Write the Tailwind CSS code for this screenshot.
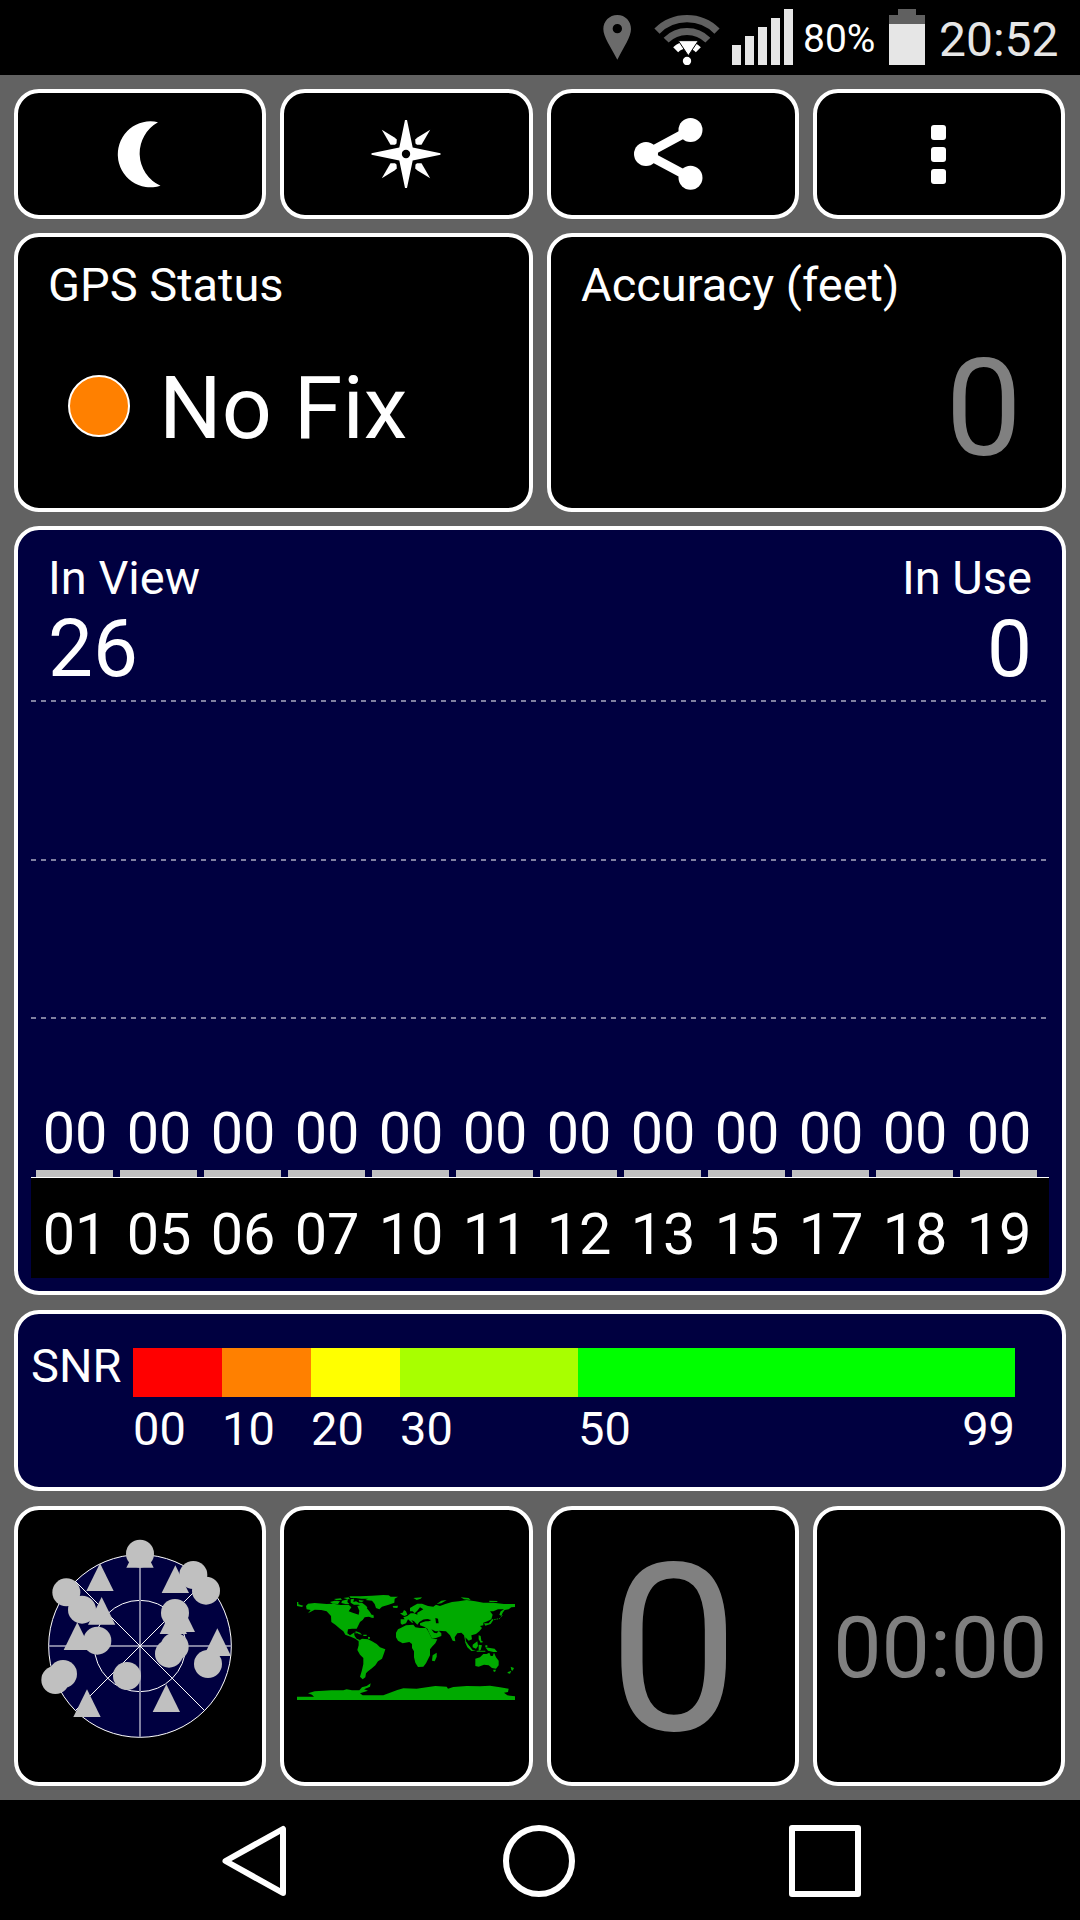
<!DOCTYPE html>
<html lang="en">
<head>
  <meta charset="UTF-8">
  <meta name="viewport" content="width=device-width, initial-scale=1">
  <title>GPS Status</title>
  <script src="https://cdn.jsdelivr.net/npm/@tailwindcss/browser@4"></script>
</head>
<body class="w-[1080px] h-[1920px] overflow-hidden bg-[#626262] text-white font-['Roboto',sans-serif] leading-none flex flex-col">

  <!-- Status bar -->
  <header class="h-[75px] shrink-0 bg-black flex items-start pl-[603px]">
    <svg class="w-7 h-[45px] mt-[15px]" viewBox="69 45 84 135">
      <path fill="#6b6b6b" fill-rule="evenodd" d="M112 45C88 45 70 64 70 87C70 111 92 140 112 179C132 140 153 111 153 87C153 64 136 45 112 45ZM112 72A14 14 0 1 1 112 100A14 14 0 1 1 112 72Z"/>
    </svg>
    <svg class="w-[66px] h-[52px] mt-[13px] ml-[23px]" viewBox="222 39 198 156" fill="none">
      <path stroke="#606060" stroke-width="22" d="M231 93.200A127 127 0 0 1 411 93.200"/>
      <path stroke="#606060" stroke-width="21" d="M258.400 120.400A88.500 88.500 0 0 1 383.600 120.400"/>
      <path stroke="#fff" stroke-width="21" d="M287 149A48 48 0 0 1 355 149"/>
      <path fill="#fff" stroke="#000" stroke-width="3" d="M295 122L355 122L325 167Z"/>
      <circle cx="321" cy="183" r="12.500" fill="#fff"/>
    </svg>
    <div class="flex items-end gap-1 h-14 mt-[9px] ml-3">
      <div class="w-[9px] h-5 bg-[#e6e6e6]"></div>
      <div class="w-[9px] h-[29px] bg-[#e6e6e6]"></div>
      <div class="w-[9px] h-[38px] bg-[#e6e6e6]"></div>
      <div class="w-[9px] h-[47px] bg-[#e6e6e6]"></div>
      <div class="w-[9px] h-14 bg-[#e6e6e6]"></div>
    </div>
    <div class="w-[86px] ml-[10px] mt-5 text-[39px]">80%</div>
    <div class="w-9 mt-[9px] flex flex-col items-center">
      <div class="w-[18px] h-1.5 bg-[#606060]"></div>
      <div class="w-9 h-[9px] bg-[#606060]"></div>
      <div class="w-9 h-[41px] bg-[#e6e6e6]"></div>
    </div>
    <div class="ml-[14px] mt-4 text-5xl leading-none text-[#e6e6e6]">20:52</div>
  </header>

  <main class="flex flex-col h-[1725px] shrink-0 px-[14px] pt-[14px]">

    <!-- Toolbar -->
    <div class="grid grid-cols-4 gap-[14px] h-[130px] mr-px">
      <button class="bg-black border-4 border-white rounded-[25px] flex items-center justify-center">
        <svg class="w-[70px] h-[70px]" viewBox="105 119 70 70" fill="#fff">
          <path d="M158 122.300A32.500 33 0 1 0 160.500 185.700A35.500 35.500 0 0 1 158 122.300Z"/>
        </svg>
      </button>
      <button class="bg-black border-4 border-white rounded-[25px] flex items-center justify-center">
        <svg class="w-[70px] h-[70px]" viewBox="-35 -35 70 70" fill="#fff">
          <path d="M-1 -34H1L6.700 -6.500L34.500 -.7V.7L6.700 6.500L1 34H-1L-6.700 6.500L-34.500 .7V-.7L-6.700 -6.500Z"/>
          <g id="ray">
            <path d="M-24.200 -24.200L-11.500 -16.500L-9.200 -14.500L-9.500 -10.500L-11 -9.300L-15.500 -9.300Z"/>
            <path d="M24.200 -24.200L11.500 -16.500L9.200 -14.500L9.500 -10.500L11 -9.300L15.500 -9.300Z"/>
          </g>
          <use href="#ray" transform="scale(1 -1)"/>
          <circle r="4.200" fill="#000"/>
        </svg>
      </button>
      <button class="bg-black border-4 border-white rounded-[25px] flex items-center justify-center">
        <svg class="w-20 h-20" viewBox="632.500 114 80 80">
          <path d="M690 130L645.500 154L690 177.700" fill="none" stroke="#fff" stroke-width="9"/>
          <circle cx="645.500" cy="154" r="12" fill="#fff"/>
          <circle cx="690" cy="130" r="12" fill="#fff"/>
          <circle cx="690" cy="177.700" r="12" fill="#fff"/>
        </svg>
      </button>
      <button class="bg-black border-4 border-white rounded-[25px] flex flex-col gap-[7px] items-center justify-center">
        <span class="w-[15px] h-[15px] rounded-[3px] bg-white"></span>
        <span class="w-[15px] h-[15px] rounded-[3px] bg-white"></span>
        <span class="w-[15px] h-[15px] rounded-[3px] bg-white"></span>
      </button>
    </div>

    <!-- Fix state and accuracy -->
    <div class="grid grid-cols-2 gap-[14px] h-[279px] mt-[14px]">
      <section class="bg-black border-4 border-white rounded-[25px] pt-6 pl-[30px]">
        <h2 class="text-[47px] leading-[48px]">GPS Status</h2>
        <div class="flex mt-[55px] pl-5">
          <div class="w-[62px] h-[62px] mt-[11px] rounded-full bg-[#ff8000] border-2 border-white"></div>
          <div class="text-[88px] ml-[29px]">No Fix</div>
        </div>
      </section>
      <section class="bg-black border-4 border-white rounded-[25px] pt-6 pl-[30px] pr-10">
        <h2 class="text-[47px] leading-[48px]">Accuracy (feet)</h2>
        <div class="text-[136px] text-right text-[#808080] mt-8">0</div>
      </section>
    </div>

    <!-- Satellite signal chart -->
    <section class="h-[769px] mt-[14px] bg-[#000040] border-4 border-white rounded-[25px] pt-6 px-[13px] flex flex-col">
      <div class="flex justify-between px-[17px] h-[146px]">
        <div>
          <h2 class="text-[47px] leading-[48px]">In View</h2>
          <div class="text-[80px] mt-[7px]">26</div>
        </div>
        <div class="text-right">
          <h2 class="text-[47px] leading-[48px]">In Use</h2>
          <div class="text-[80px] mt-[7px]">0</div>
        </div>
      </div>
      <div class="h-0.5 bg-[repeating-linear-gradient(90deg,#8080a0_0_5px,transparent_5px_10px)]"></div>
      <div class="h-0.5 mt-[157px] bg-[repeating-linear-gradient(90deg,#8080a0_0_5px,transparent_5px_10px)]"></div>
      <div class="h-0.5 mt-[156px] bg-[repeating-linear-gradient(90deg,#8080a0_0_5px,transparent_5px_10px)]"></div>
      <div id="levels" class="flex gap-[7px] pl-[5px] h-[72px] mt-[86px]"></div>
      <div id="sats" class="flex gap-[7px] pl-[5px] h-[101px] bg-black border-t border-white pt-7"></div>
    </section>

    <!-- SNR scale -->
    <section class="h-[181px] mt-[15px] bg-[#000040] border-4 border-white rounded-[25px] flex pl-[13px] text-[47px] leading-[48px]">
      <div class="w-[102px] mt-7">SNR</div>
      <div class="flex mt-[34px]">
        <div class="w-[89px]"><div class="h-[49px] mb-2 bg-[#ff0000]"></div>00</div>
        <div class="w-[89px]"><div class="h-[49px] mb-2 bg-[#ff8000]"></div>10</div>
        <div class="w-[89px]"><div class="h-[49px] mb-2 bg-[#ffff00]"></div>20</div>
        <div class="w-[178px]"><div class="h-[49px] mb-2 bg-[#a8ff00]"></div>30</div>
        <div class="w-[437px]">
          <div class="h-[49px] mb-2 bg-[#00ff00]"></div>
          <div class="flex justify-between"><span>50</span><span>99</span></div>
        </div>
      </div>
    </section>

    <!-- Page previews -->
    <div class="grid grid-cols-4 gap-[14px] h-[280px] mt-[15px] mr-px text-[#808080]">
      <section class="bg-black border-4 border-white rounded-[25px] flex justify-center">
        <svg class="w-[220px] h-[230px] mt-[10px]" viewBox="0 0 660 690">
          <circle cx="330" cy="378" r="274" fill="#000040" stroke="#fff" stroke-width="3"/>
          <circle cx="330" cy="378" r="137" fill="none" stroke="#fff" stroke-width="3"/>
          <path stroke="#8080a0" stroke-width="6" d="M330 104V652M56 378H604"/>
          <path stroke="#fff" stroke-width="3" d="M136 184L524 572M524 184L136 572"/>
          <g id="markers" fill="#c0c0c0"></g>
        </svg>
      </section>
      <section class="bg-black border-4 border-white rounded-[25px] flex justify-center">
        <svg class="w-[218px] h-[105px] mt-[85px]" viewBox="51 75 654 315" fill="#00aa00">
          <!-- Americas -->
          <path d="M78 108L84 101L104 99L140 102L160 101L182 105L206 104L214 112L206 124L218 128L236 134L238 122L232 108L246 104L258 112L268 124L276 136L280 144L266 140L254 142L248 150L240 156L236 164L230 176L216 176L204 178L202 190L210 196L222 188L224 198L230 206L240 210L236 214L226 206L212 200L196 194L190 184L180 176L166 164L154 156L153 138L140 124L124 120L104 119L84 130L92 120L80 118Z"/>
          <path d="M236 212L246 206L264 208L276 214L290 222L300 232L316 238L312 250L306 266L294 274L286 286L274 296L264 304L258 310L256 322L248 328L240 320L246 300L250 282L250 264L240 254L232 240L236 226Z"/>
          <path d="M224 182L240 188L246 194L236 192ZM250 194H260V198H250ZM218 190L232 186L236 190L224 190ZM264 200L270 202V206H264Z"/>
          <!-- Arctic islands and Greenland -->
          <path d="M208 79L240 79L276 77L310 75L326 76L332 80L354 80L344 86L343 98L326 104L306 110L298 118L288 114L284 102L276 92L256 90L264 86L244 86L228 84L212 84Z"/>
          <path d="M150 96L164 92L180 94L174 102L158 101ZM162 87L182 85L186 89L170 91ZM186 92L204 88L202 96L208 102L196 102L184 99ZM190 84L206 82L210 88L200 87ZM212 88L222 86L220 96L228 94L236 98L246 98L256 106L262 112L258 120L248 112L236 104L222 104L212 98ZM270 136L280 134L282 143L272 142ZM338 108L354 107L352 114L340 113ZM51 96L55 96L55 103L70 107L66 111L51 108ZM236 90L252 92L246 96L238 95Z"/>
          <!-- Africa, Madagascar -->
          <path d="M362 174L378 166L400 164L406 172L420 174L438 174L444 182L450 194L456 206L472 208L466 220L456 230L450 238L450 256L444 268L438 280L430 290L414 291L406 278L402 262L402 244L396 234L396 222L388 216L368 220L354 212L348 202L348 188L354 178Z"/>
          <path d="M458 256L470 248L470 260L464 274L456 272Z"/>
          <!-- Europe and Asia -->
          <path d="M362 148L374 148L370 142L382 138L392 130L402 130L412 134L412 128L420 124L430 118L420 112L412 122L404 130L398 124L390 124L390 114L400 108L412 101L426 101L444 108L460 110L468 104L480 108L496 102L516 96L536 94L560 90L586 94L610 98L640 98L672 102L705 102V111L694 112L686 118L674 120L668 128L664 138L658 134L662 124L672 118L654 118L640 124L630 124L638 134L634 148L622 154L610 158L610 166L600 168L606 174L598 184L588 192L574 196L576 208L566 212L556 202L558 214L566 226L572 234L566 232L556 216L552 196L544 188L532 190L524 202L526 214L518 212L510 196L498 184L476 182L484 190L484 198L468 204L456 206L448 190L442 176L432 170L420 166L420 160L436 154L446 154L454 150L442 148L428 150L418 156L412 164L402 154L394 150L400 158L396 158L384 148L378 160L366 164L362 160Z"/>
          <path d="M360 130L368 128L372 120L378 124L382 134L374 138L368 136ZM400 84L426 82L422 86L410 90L404 86ZM470 102L484 92L500 90L484 100ZM542 82L566 84L572 90L552 88ZM628 92L652 93V96H628ZM612 160L626 160L636 148L640 150L632 162L616 167Z"/>
          <path fill="none" stroke="#00aa00" stroke-width="3" stroke-dasharray="4 3" d="M636 150L658 146L668 136"/>
          <path fill="#000" d="M466 144L474 146L476 160L468 160ZM428 149L444 148L452 152L430 154ZM454 178L466 184L476 184L470 190L462 188Z"/>
          <!-- South-east Asia and Oceania -->
          <path d="M554 214L568 228L578 240L588 242L574 243L562 232ZM578 224L592 214L594 228L588 236L578 232ZM596 196L602 198L604 212L610 216L602 218L596 208ZM596 224L606 226L602 240L596 242ZM616 232L630 234L644 236L652 246L640 246L624 242ZM590 242H616V245H590ZM616 226H622V231H616Z"/>
          <path d="M586 266L600 262L610 252L620 252L628 248L632 258L638 258L642 248L648 262L656 272L656 286L648 296L636 294L626 286L612 284L596 290L586 288Z"/>
          <path d="M640 299H648L645 306L640 304ZM692 290L702 294L698 302L694 300ZM684 306L694 302L690 311L682 309Z"/>
          <!-- Antarctica -->
          <path d="M51 380H102L96 374L84 370L104 364L130 362L154 361L190 361L200 358L216 361L238 361L246 352L260 348L272 340L270 350L252 358L264 362L240 370L248 376L280 376L310 376L330 368L352 360L370 355L410 356L440 352L466 348L500 350L504 356L520 351L560 348L600 349L630 347L660 352L686 356L684 366L672 368L682 376L705 379V390H51Z"/>
        </svg>
      </section>
      <section class="bg-black border-4 border-white rounded-[25px] flex items-center justify-center">
        <div class="text-[233px] pt-2 pl-0.5">0</div>
      </section>
      <section class="bg-black border-4 border-white rounded-[25px] flex items-center justify-center">
        <div class="text-[86px] pt-1 pl-[3px]">00:00</div>
      </section>
    </div>
  </main>

  <!-- Navigation bar -->
  <nav class="h-[120px] shrink-0 bg-black flex items-start pt-[23px] pl-[219px]">
    <svg class="w-[70px] h-[76px]" viewBox="0 0 70 76" fill="none" stroke="#fff" stroke-width="6" stroke-linejoin="round">
      <path d="M64 6V70L6.500 38Z"/>
    </svg>
    <svg class="w-[76px] h-[76px] ml-[212px]" viewBox="0 0 76 76" fill="none" stroke="#fff" stroke-width="6">
      <circle cx="38" cy="38" r="33"/>
    </svg>
    <svg class="w-[76px] h-[76px] ml-[210px]" viewBox="0 0 76 76" fill="none" stroke="#fff" stroke-width="6" stroke-linejoin="round">
      <path d="M5 5H71V71H5Z"/>
    </svg>
  </nav>

  <script>
    const sats = ['01', '05', '06', '07', '10', '11', '12', '13', '15', '17', '18', '19'];

    document.getElementById('levels').innerHTML = sats.map(() => `
      <div class="w-[77px] flex flex-col items-center justify-between text-[57.6px]">
        <span class="pl-px">00</span>
        <div class="w-[77px] h-[7px] bg-[#c0c0c0]"></div>
      </div>`).join('');

    document.getElementById('sats').innerHTML = sats.map(id => `
      <div class="w-[77px] pl-px text-center text-[57.6px]">${id}</div>`).join('');

    // Triangles are given by apex, circles by centre
    const triangles = [[330, 60], [210, 130], [436, 136], [215, 231], [142, 307], [454, 253], [430, 259], [562, 325], [171, 508], [409, 493]];
    const circles = [[330, 101], [490, 165], [528, 212], [109, 217], [156, 269], [435, 279], [202, 362], [434, 380], [417, 401], [534, 432], [99, 462], [76, 480], [291, 468]];

    document.getElementById('markers').innerHTML =
      triangles.map(([x, y]) => `<path d="M${x} ${y}l41 83h-82z"/>`).join('') +
      circles.map(([x, y]) => `<circle cx="${x}" cy="${y}" r="42"/>`).join('');
  </script>
</body>
</html>
